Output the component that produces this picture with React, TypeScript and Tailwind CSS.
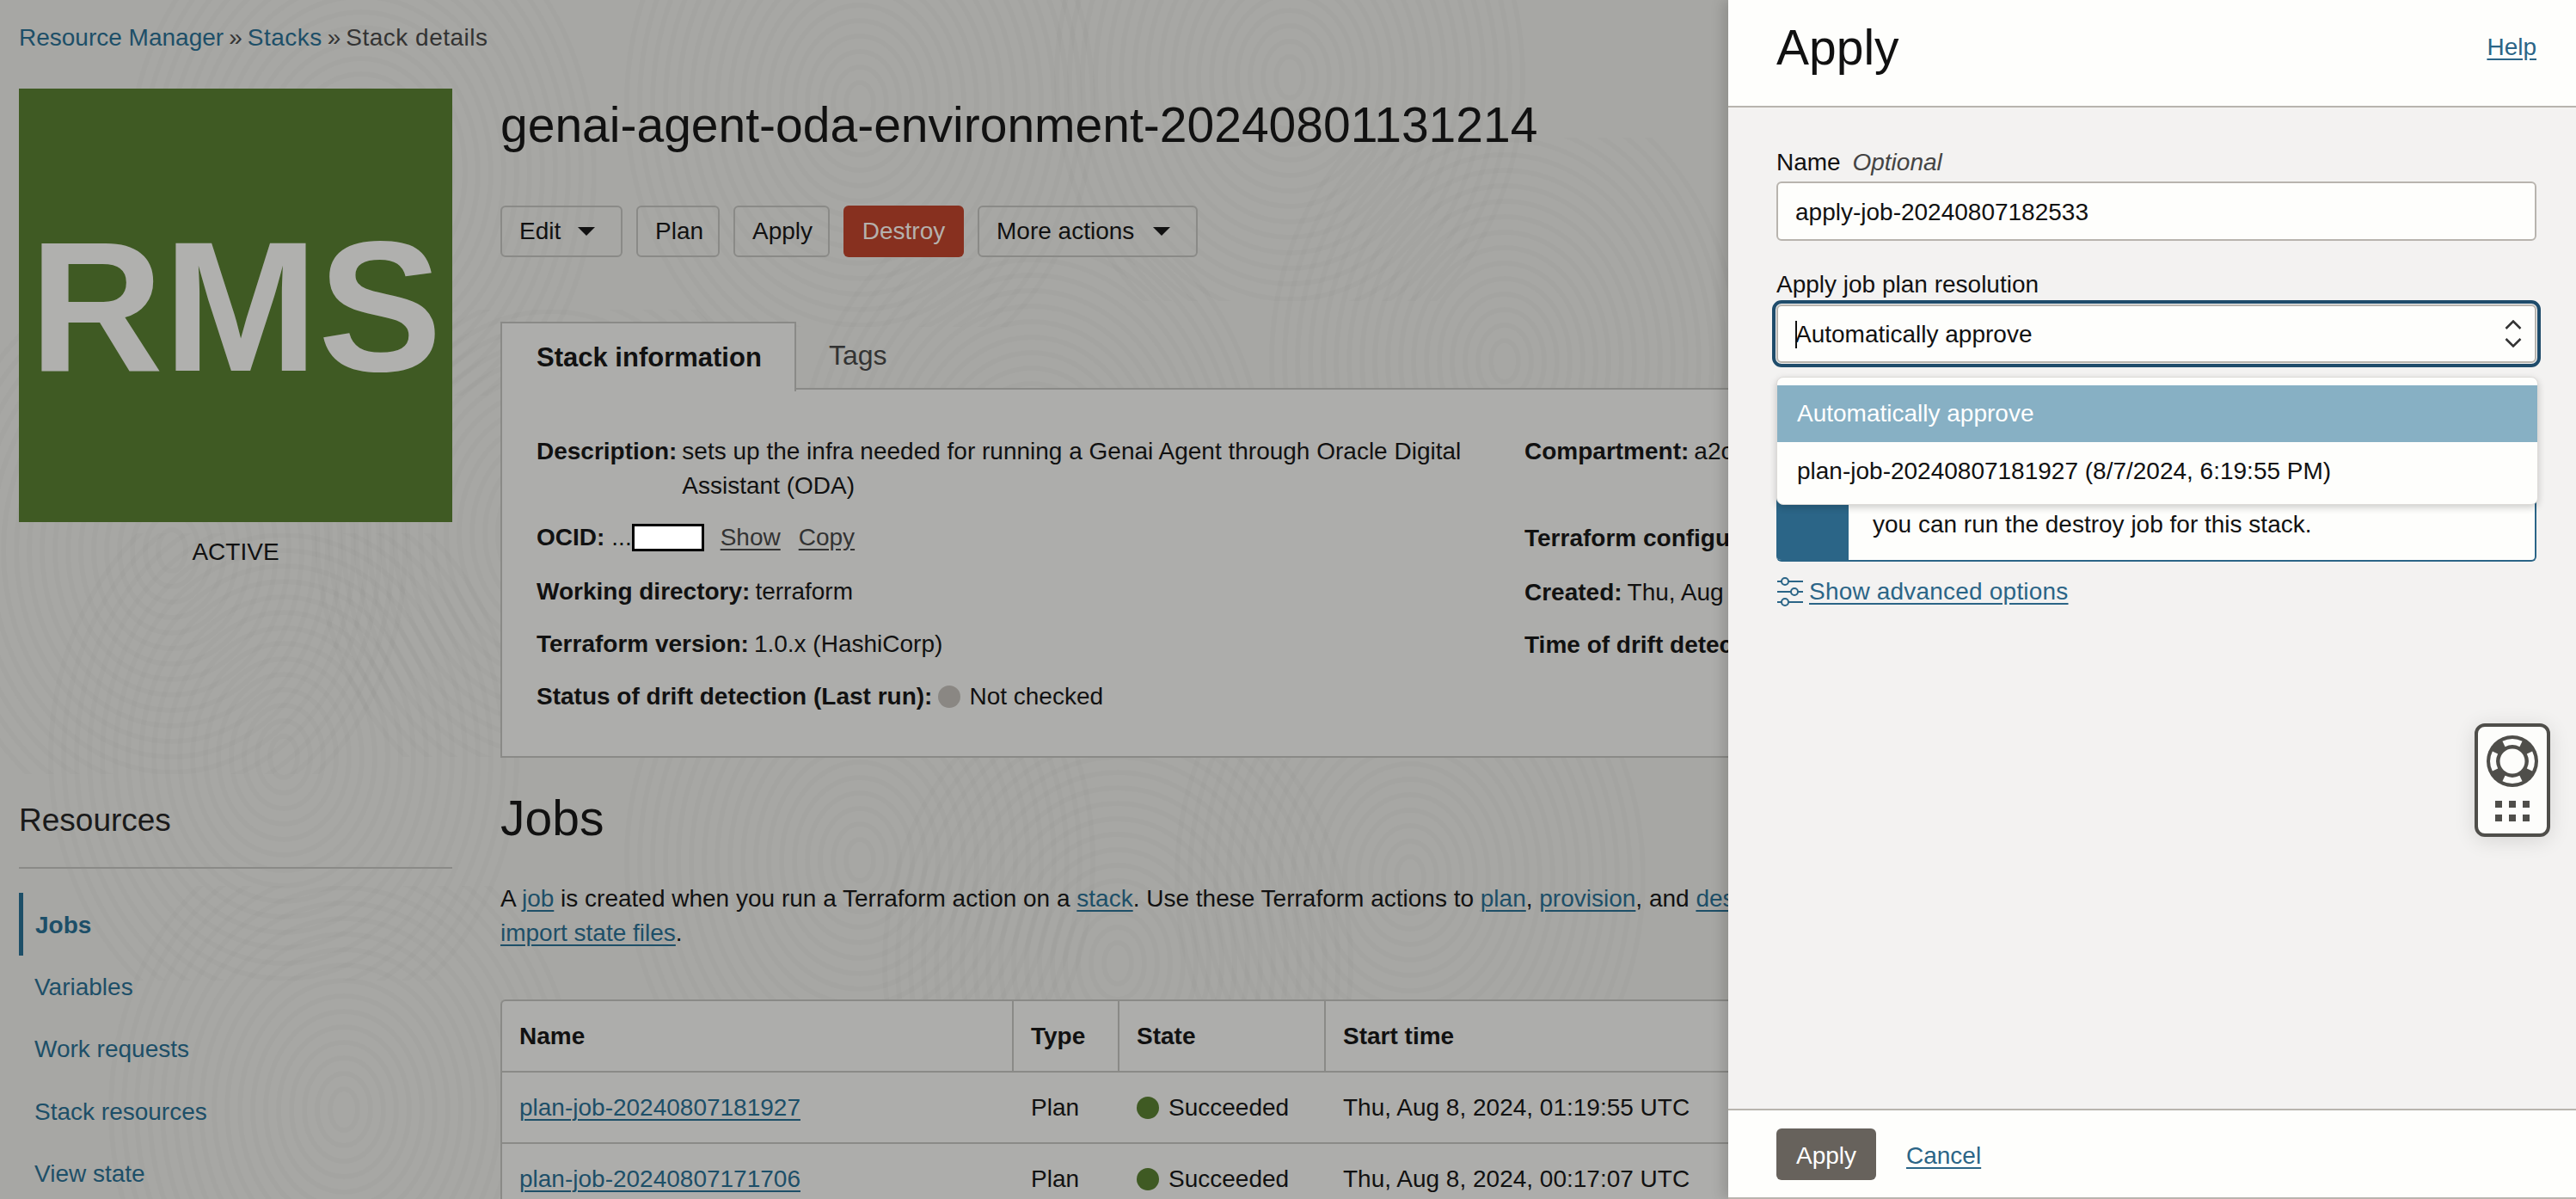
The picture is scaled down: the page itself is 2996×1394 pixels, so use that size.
import React from 'react';

const swirls = [
  { x: 420, y: 200 }, { x: 1000, y: 120 }, { x: 1500, y: 90 }, { x: 1750, y: 420 },
  { x: 200, y: 640 }, { x: 640, y: 620 }, { x: 1200, y: 560 }, { x: 330, y: 880 },
  { x: 1000, y: 1000 }, { x: 1640, y: 1020 }, { x: 400, y: 1290 }, { x: 1300, y: 1120 },
];

// low contrast fingerprint texture behind the page
const Swirls = () => (
  <svg className="absolute inset-0 w-[2010px] h-[1394px]" viewBox="0 0 2010 1394" fill="none">
    <defs>
      {swirls.map((s, i) => (
        <clipPath id={`cell-${i}`} key={i}>
          <rect x={s.x - 300} y={s.y - 260} width="600" height="520" />
        </clipPath>
      ))}
    </defs>
    {swirls.map((s, i) => (
      <g key={i} clipPath={`url(#cell-${i})`} stroke="#000" strokeOpacity="0.015" strokeWidth="6">
        {Array.from({ length: 18 }).map((_, r) => (
          <ellipse key={r} cx={s.x} cy={s.y} rx={16 + r * 15} ry={24 + r * 18} />
        ))}
      </g>
    ))}
  </svg>
);

const Button = ({ label, caret, w }: { label: string; caret?: boolean; w: string }) => (
  <button className={`h-[60px] ${w} border-2 border-[#8a8a87] rounded-md pl-[20px] pr-[30px] flex items-center justify-between text-[28px] text-[#111]`}>
    <span>{label}</span>
    {caret && <span className="w-0 h-0 border-x-[10px] border-x-transparent border-t-[10px] border-t-[#111]" />}
  </button>
);

const InfoRow = ({ label, children, mb = 'mb-[21px]' }: { label: string; children?: React.ReactNode; mb?: string }) => (
  <div className={`flex items-start whitespace-nowrap ${mb}`}>
    <span className="font-bold mr-[6px]">{label}</span>
    {children}
  </div>
);

const PageLink = ({ children }: { children: React.ReactNode }) => (
  <a className="text-[#1d4f68] underline underline-offset-4 decoration-2">{children}</a>
);

const nav = ['Variables', 'Work requests', 'Stack resources', 'View state'];

const jobs = [
  { name: 'plan-job-20240807181927', start: 'Thu, Aug 8, 2024, 01:19:55 UTC' },
  { name: 'plan-job-20240807171706', start: 'Thu, Aug 8, 2024, 00:17:07 UTC' },
];

const thCls = 'text-left font-bold px-[20px] h-[83px] border-b-2 border-[#8a8a87]';
const tdCls = 'px-[20px] h-[83px] border-b-2 border-[#8a8a87]';

const LifeRing = () => (
  <svg width="64" height="64" viewBox="-32 -32 64 64" fill="none">
    <circle r="30" fill="#4f4e4a" />
    <g stroke="#fdfdfb" strokeWidth="7">
      <path d="M -10 -20 A 22.5 22.5 0 0 1 10 -20" />
      <path d="M 20 -10 A 22.5 22.5 0 0 1 20 10" />
      <path d="M 10 20 A 22.5 22.5 0 0 1 -10 20" />
      <path d="M -20 10 A 22.5 22.5 0 0 1 -20 -10" />
    </g>
    <circle r="14.5" fill="#fdfdfb" />
  </svg>
);

const SlidersIcon = () => (
  <svg width="36" height="38" viewBox="0 0 36 38" fill="none" stroke="#2b6587" strokeWidth="2" className="shrink-0">
    <path d="M1 7h5M14 7h17M1 19h16M25 19h6M1 31h5M14 31h17" />
    <circle cx="10" cy="7" r="4" />
    <circle cx="21" cy="19" r="4" />
    <circle cx="10" cy="31" r="4" />
  </svg>
);

const SelectArrows = () => (
  <svg width="20" height="32" viewBox="0 0 20 32" fill="none" stroke="#333" strokeWidth="2.5">
    <path d="M1.5 10 10 1.5 18.5 10" />
    <path d="M1.5 22 10 30.5 18.5 22" />
  </svg>
);

export default function App() {
  return (
    <div className="relative w-[2996px] h-[1394px] overflow-hidden bg-[#a7a7a4] text-[28px] leading-[40px] text-[#111] font-['Liberation_Sans',Arial,sans-serif]">
      <Swirls />

      <div className="relative w-[2996px] pl-[22px] pt-[24px]">
        <nav className="h-[40px] mb-[39px] flex items-center gap-[6px] text-[#333]">
          <span className="text-[#1d4f68]">Resource Manager</span>
          <span>»</span>
          <span className="text-[#1d4f68] tracking-[0.5px]">Stacks</span>
          <span>»</span>
          <span className="tracking-[0.5px]">Stack details</span>
        </nav>

        <div className="flex items-start">
          <aside className="w-[504px] shrink-0">
            <div className="w-[504px] h-[504px] bg-[#3f5a23] flex items-center justify-center pt-[2px]">
              <span className="text-[216px] leading-none font-bold text-[#b0b0ae]">RMS</span>
            </div>
            <div className="mt-[15px] text-center">ACTIVE</div>

            <h2 className="mt-[264px] text-[37px] leading-[56px] text-[#1a1a1a] pb-[26px] border-b-2 border-[#8a8a87]">Resources</h2>
            <ul className="mt-[28px] text-[#1d4f68]">
              <li className="h-[73px] flex items-center pl-[14px] pt-[3px] font-bold border-l-[5px] border-[#1d4f68]">Jobs</li>
              {nav.map(item => (
                <li key={item} className="h-[72.5px] flex items-center pl-[18px] pt-[1px]">{item}</li>
              ))}
            </ul>
          </aside>

          <main className="ml-[56px] w-[2392px] shrink-0 pt-[6px]">
            <h1 className="text-[57px] leading-[72px] text-[#111]">genai-agent-oda-environment-20240801131214</h1>

            <div className="mt-[58px] flex gap-[16px]">
              <Button label="Edit" caret w="w-[142px]" />
              <Button label="Plan" w="w-[97px]" />
              <Button label="Apply" w="w-[112px]" />
              <button className="h-[60px] w-[140px] rounded-md bg-[#87301f] text-[#b5b1ad] text-[28px]">Destroy</button>
              <Button label="More actions" caret w="w-[256px]" />
            </div>

            <div className="mt-[75px] flex items-end">
              <div className="h-[81px] w-[344px] -mb-[2px] relative z-10 bg-[#adadab] border-2 border-b-0 border-[#8a8a87] flex items-center pl-[40px] text-[31px] font-bold">
                Stack information
              </div>
              <div className="flex-1 h-[79px] border-b-2 border-[#8a8a87] pl-[38px] flex items-center text-[32px] text-[#333]">Tags</div>
            </div>

            <section className="h-[428px] bg-[#adadab] border-l-2 border-b-2 border-[#8a8a87] pl-[40px] pt-[52px] flex">
              <div className="w-[1149px] shrink-0">
                <div className="flex items-start mb-[20px]">
                  <span className="font-bold mr-[6px] whitespace-nowrap">Description:</span>
                  <span className="w-[930px]">sets up the infra needed for running a Genai Agent through Oracle Digital Assistant (ODA)</span>
                </div>
                <InfoRow label="OCID:" mb="mb-[23px]">
                  <span className="ml-[2px]">...</span>
                  <span className="w-[84px] h-[32px] mt-[4px] bg-white border-[3px] border-black" />
                  <span className="ml-[19px] text-[#333] underline underline-offset-4">Show</span>
                  <span className="ml-[21px] text-[#333] underline underline-offset-4">Copy</span>
                </InfoRow>
                <InfoRow label="Working directory:"><span>terraform</span></InfoRow>
                <InfoRow label="Terraform version:"><span>1.0.x (HashiCorp)</span></InfoRow>
                <InfoRow label="Status of drift detection (Last run):">
                  <span className="w-[26px] h-[26px] mt-[7px] ml-[1px] rounded-full bg-[#8a8783]" />
                  <span className="ml-[10px]">Not checked</span>
                </InfoRow>
              </div>
              <div>
                <InfoRow label="Compartment:"><span>a2c</span></InfoRow>
                <div className="h-[19px] mb-[21px]" />
                <InfoRow label="Terraform configuration" mb="mb-[23px]" />
                <InfoRow label="Created:"><span>Thu, Aug 8, 2024</span></InfoRow>
                <InfoRow label="Time of drift detection" />
              </div>
            </section>

            <h2 className="mt-[34px] text-[57px] leading-[72px]">Jobs</h2>
            <p className="mt-[38px] whitespace-nowrap">
              A <PageLink>job</PageLink> is created when you run a Terraform action on a <PageLink>stack</PageLink>. Use these Terraform actions to <PageLink>plan</PageLink>, <PageLink>provision</PageLink>, and <PageLink>destroy</PageLink> resources.
              <br />
              <PageLink>import state files</PageLink>.
            </p>

            <table className="mt-[57px] table-fixed w-[2392px] bg-[#adadab] border-t-2 border-l-2 border-[#8a8a87] border-separate border-spacing-0 rounded-tl-md">
              <thead>
                <tr>
                  <th className={`${thCls} w-[595px] border-r-2`}>Name</th>
                  <th className={`${thCls} w-[123px] border-r-2`}>Type</th>
                  <th className={`${thCls} w-[240px] border-r-2`}>State</th>
                  <th className={thCls}>Start time</th>
                </tr>
              </thead>
              <tbody>
                {jobs.map(job => (
                  <tr key={job.name}>
                    <td className={tdCls}><PageLink>{job.name}</PageLink></td>
                    <td className={tdCls}>Plan</td>
                    <td className={tdCls}>
                      <span className="flex items-center gap-[11px]">
                        <span className="w-[26px] h-[26px] rounded-full bg-[#3f5a23]" />
                        Succeeded
                      </span>
                    </td>
                    <td className={tdCls}>{job.start}</td>
                  </tr>
                ))}
              </tbody>
            </table>
          </main>
        </div>
      </div>

      {/* drawer */}
      <aside className="absolute top-0 right-0 z-20 w-[986px] h-[1394px] flex flex-col bg-[#f3f2f1] shadow-[-6px_0_14px_rgba(0,0,0,0.15)]">
        <header className="h-[125px] shrink-0 bg-[#fefefc] border-b-2 border-[#b8b4ae] pl-[56px] pr-[46px] flex items-center justify-between">
          <h2 className="text-[57px] leading-[72px] -mt-[14px]">Apply</h2>
          <a className="text-[#2b6587] underline underline-offset-4 -mt-[14px]">Help</a>
        </header>

        <div className="relative flex-1 pl-[56px] pr-[46px] pt-[43px]">
          <label className="block h-[40px] pt-[1px]">Name <em className="ml-[6px] text-[#444]">Optional</em></label>
          <input
            readOnly
            value="apply-job-20240807182533"
            className="mt-[3px] block w-full h-[69px] px-[20px] pt-[3px] bg-[#fefefc] border-2 border-[#b8b4ae] rounded-md outline-none"
          />
          <label className="block h-[40px] mt-[30px] pt-[1px]">Apply job plan resolution</label>
          <div className="relative mt-[4px] h-[68px] bg-[#fefefc] border-2 border-[#b8b4ae] rounded-md outline-[4px] outline-offset-[1px] outline-[#1f4c6b] flex items-center pl-[20px] pt-[2px]">
            <span className="w-[2px] h-[32px] bg-[#111] -mr-[2px]" />
            <span>Automatically approve</span>
            <span className="absolute right-[15px] top-[16px]">
              <SelectArrows />
            </span>
          </div>

          <div className="mt-[38px] h-[193px] flex bg-[#fefefc] border-2 border-l-0 border-t-0 border-[#2b6587] rounded-md overflow-hidden">
            <div className="w-[84px] shrink-0 bg-[#2b6587]" />
            <div className="pl-[28px] pt-[90px] whitespace-nowrap">
              To destroy any resources created when the stack is run,
              <br />
              you can run the destroy job for this stack.
            </div>
          </div>

          <a className="mt-[15px] flex items-center gap-[2px] text-[#2b6587]">
            <SlidersIcon />
            <span className="underline underline-offset-4 tracking-[0.2px]">Show advanced options</span>
          </a>

          {/* open listbox */}
          <ul className="absolute top-[313px] left-[56px] w-[886px] h-[149px] pt-[9px] bg-[#fefefc] rounded-lg border border-[#dddbd8] shadow-[0_3px_8px_rgba(0,0,0,0.2)]">
            <li className="h-[66px] px-[23px] flex items-center bg-[#87b0c4] text-white">Automatically approve</li>
            <li className="h-[66px] px-[23px] pt-[2px] flex items-center">plan-job-20240807181927 (8/7/2024, 6:19:55 PM)</li>
          </ul>

          {/* help widget */}
          <div className="absolute top-[716px] left-[868px] w-[88px] h-[132px] bg-[#fdfdfb] border-[4px] border-[#4f4e4a] rounded-xl shadow-[0_4px_24px_rgba(0,0,0,0.12)] flex flex-col items-center pt-[8px]">
            <LifeRing />
            <div className="mt-[14px] grid grid-cols-3 gap-[8px]">
              {Array.from({ length: 6 }).map((_, i) => (
                <span key={i} className="w-[8px] h-[8px] bg-[#4f4e4a]" />
              ))}
            </div>
          </div>
        </div>

        <footer className="h-[105px] shrink-0 bg-[#fefefc] border-y-2 border-[#b8b4ae] pl-[56px] flex items-center gap-[35px]">
          <button className="w-[116px] h-[60px] pt-[4px] rounded-md bg-[#67625c] text-white">Apply</button>
          <a className="pt-[4px] text-[#2b6587] underline underline-offset-4">Cancel</a>
        </footer>
      </aside>
    </div>
  );
}
